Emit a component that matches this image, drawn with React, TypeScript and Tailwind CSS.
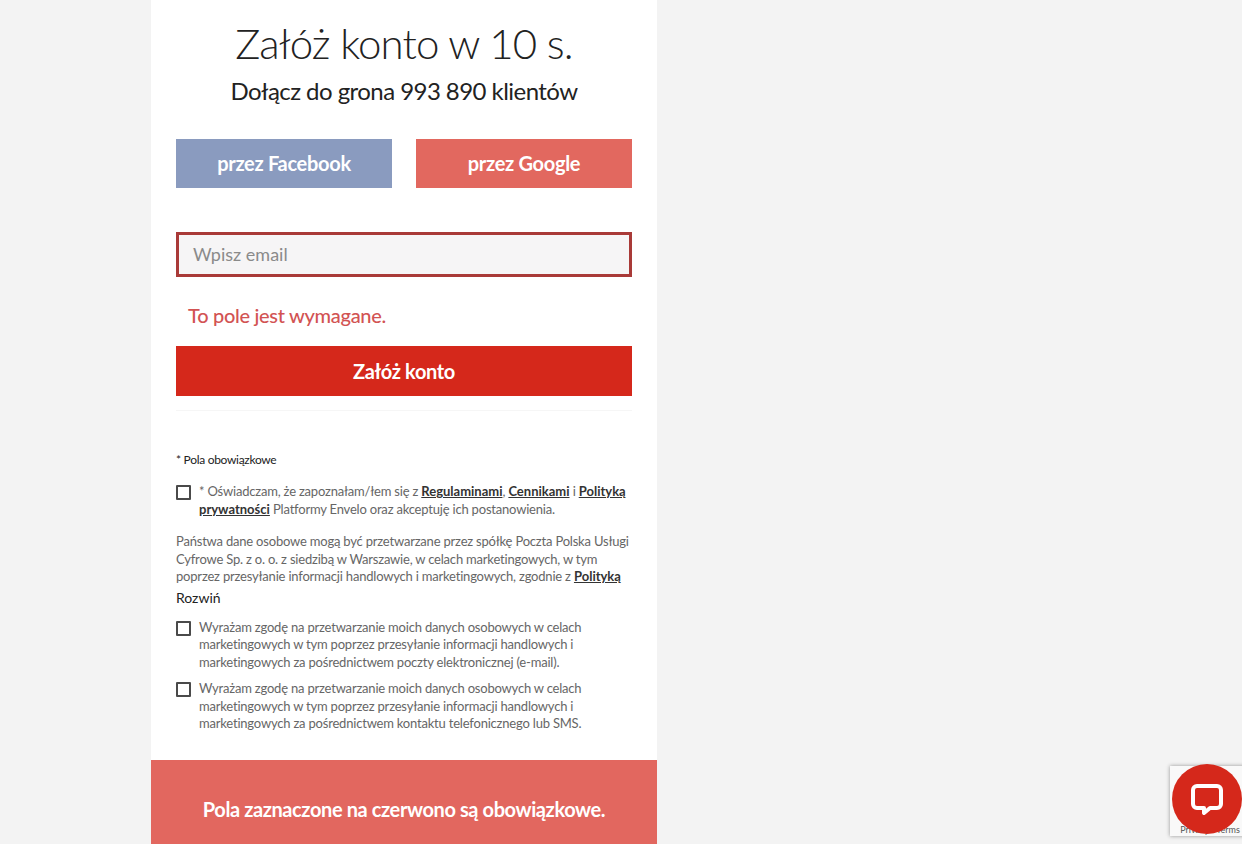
import React from "react";

const Checkbox: React.FC<{ className?: string }> = ({ className }) => (
  <span
    className={`block w-[15px] h-[15px] shrink-0 border-2 border-[#4a4a4a] rounded-[1px] bg-white ${className ?? ""}`}
  />
);

const App: React.FC = () => {
  return (
    <div className="relative h-[844px] overflow-hidden bg-[#f3f3f3] font-['Lato','Liberation_Sans',sans-serif]">
      <div className="ml-[151px] w-[506px] h-[844px] bg-white flex flex-col">
        <div className="px-[25px] flex flex-col flex-1">
          <h1 className="mt-[17px] h-[52px] leading-[52px] text-center text-[42px] font-light tracking-[-0.85px] text-[#222]">
            Załóż konto w 10 s.
          </h1>
          <p className="mt-[6px] h-[32px] leading-[32px] text-center text-[24px] tracking-[-0.55px] text-[#222]">
            Dołącz do grona 993 890 klientów
          </p>

          <div className="mt-[32px] flex justify-between">
            <button className="w-[216px] h-[49px] pb-[2px] bg-[#8a9bbf] text-white text-[20px] font-bold tracking-[-0.3px]">
              przez Facebook
            </button>
            <button className="w-[216px] h-[49px] pb-[2px] bg-[#e2685f] text-white text-[20px] font-bold tracking-[-0.3px]">
              przez Google
            </button>
          </div>

          <div className="mt-[44px] h-[45px] border-[3px] border-[#a93a38] bg-[#f6f5f6] pl-[14px] flex items-center text-[18px] text-[#8a8a8a]">
            Wpisz email
          </div>

          <p className="mt-[26px] ml-[12px] h-[24px] leading-[24px] text-[20px] font-medium tracking-[-0.3px] text-[#d25353]">
            To pole jest wymagane.
          </p>

          <button className="mt-[19px] h-[50px] pb-[1px] bg-[#d5281b] text-white text-[20px] font-bold tracking-[-0.35px]">
            Załóż konto
          </button>

          <div className="mt-[14px] border-t border-[#f6f6f6]" />

          <p className="mt-[41px] h-[16px] leading-[16px] text-[12px] tracking-[-0.3px] text-[#222]">
            * Pola obowiązkowe
          </p>

          <div className="mt-[15px] flex gap-[8px]">
            <Checkbox className="mt-[2px]" />
            <p className="text-[13px] leading-[17.5px] tracking-[-0.2px] text-[#666]">
              * Oświadczam, że zapoznałam/łem się z{" "}
              <a className="font-bold underline tracking-[0px] text-[#333]">Regulaminami</a>,{" "}
              <a className="font-bold underline tracking-[0px] text-[#333]">Cennikami</a> i{" "}
              <a className="font-bold underline tracking-[0px] text-[#333]">Polityką prywatności</a>{" "}
              Platformy Envelo oraz akceptuję ich postanowienia.
            </p>
          </div>

          <p className="mt-[15px] text-[13px] leading-[17.5px] tracking-[-0.2px] text-[#666]">
            Państwa dane osobowe mogą być przetwarzane przez spółkę Poczta Polska Usługi Cyfrowe Sp. z o. o. z siedzibą w Warszawie, w celach marketingowych, w tym poprzez przesyłanie informacji handlowych i marketingowych, zgodnie z{" "}
            <a className="font-bold underline tracking-[0px] text-[#333]">Polityką</a>
          </p>

          <p className="mt-[2px] h-[20px] leading-[20px] text-[14px] text-[#222]">Rozwiń</p>

          <div className="mt-[11px] flex gap-[8px]">
            <Checkbox className="mt-[2px]" />
            <p className="w-[420px] text-[13px] leading-[17.5px] tracking-[-0.2px] text-[#666]">
              Wyrażam zgodę na przetwarzanie moich danych osobowych w celach marketingowych w tym poprzez przesyłanie informacji handlowych i marketingowych za pośrednictwem poczty elektronicznej (e-mail).
            </p>
          </div>

          <div className="mt-[9px] flex gap-[8px]">
            <Checkbox className="mt-[2px]" />
            <p className="w-[420px] text-[13px] leading-[17.5px] tracking-[-0.2px] text-[#666]">
              Wyrażam zgodę na przetwarzanie moich danych osobowych w celach marketingowych w tym poprzez przesyłanie informacji handlowych i marketingowych za pośrednictwem kontaktu telefonicznego lub SMS.
            </p>
          </div>
        </div>

        <div className="h-[84px] shrink-0 bg-[#e2675f] flex items-center justify-center pt-[14px] text-white text-[20px] font-bold tracking-[-0.4px]">
          Pola zaznaczone na czerwono są obowiązkowe.
        </div>
      </div>

      {/* recaptcha badge + chat widget */}
      <div className="absolute left-[1170px] top-[766px] w-[80px] h-[70px] bg-[#f9f9f9] shadow-[0_0_4px_rgba(0,0,0,0.4)] overflow-hidden flex items-end justify-center text-[9px] text-[#555] whitespace-nowrap">
        Privacy - Terms
      </div>
      <div className="absolute left-[1172px] top-[764px] w-[70px] h-[70px] rounded-full bg-[#d5281b] flex items-center justify-center">
        <svg width="34" height="34" viewBox="0 0 34 34" fill="none">
          <path
            d="M7 4h20a4 4 0 0 1 4 4v14a4 4 0 0 1-4 4h-7l-6 5v-5H7a4 4 0 0 1-4-4V8a4 4 0 0 1 4-4z"
            stroke="white"
            strokeWidth="4"
            strokeLinejoin="round"
          />
        </svg>
      </div>
    </div>
  );
};

export default App;
